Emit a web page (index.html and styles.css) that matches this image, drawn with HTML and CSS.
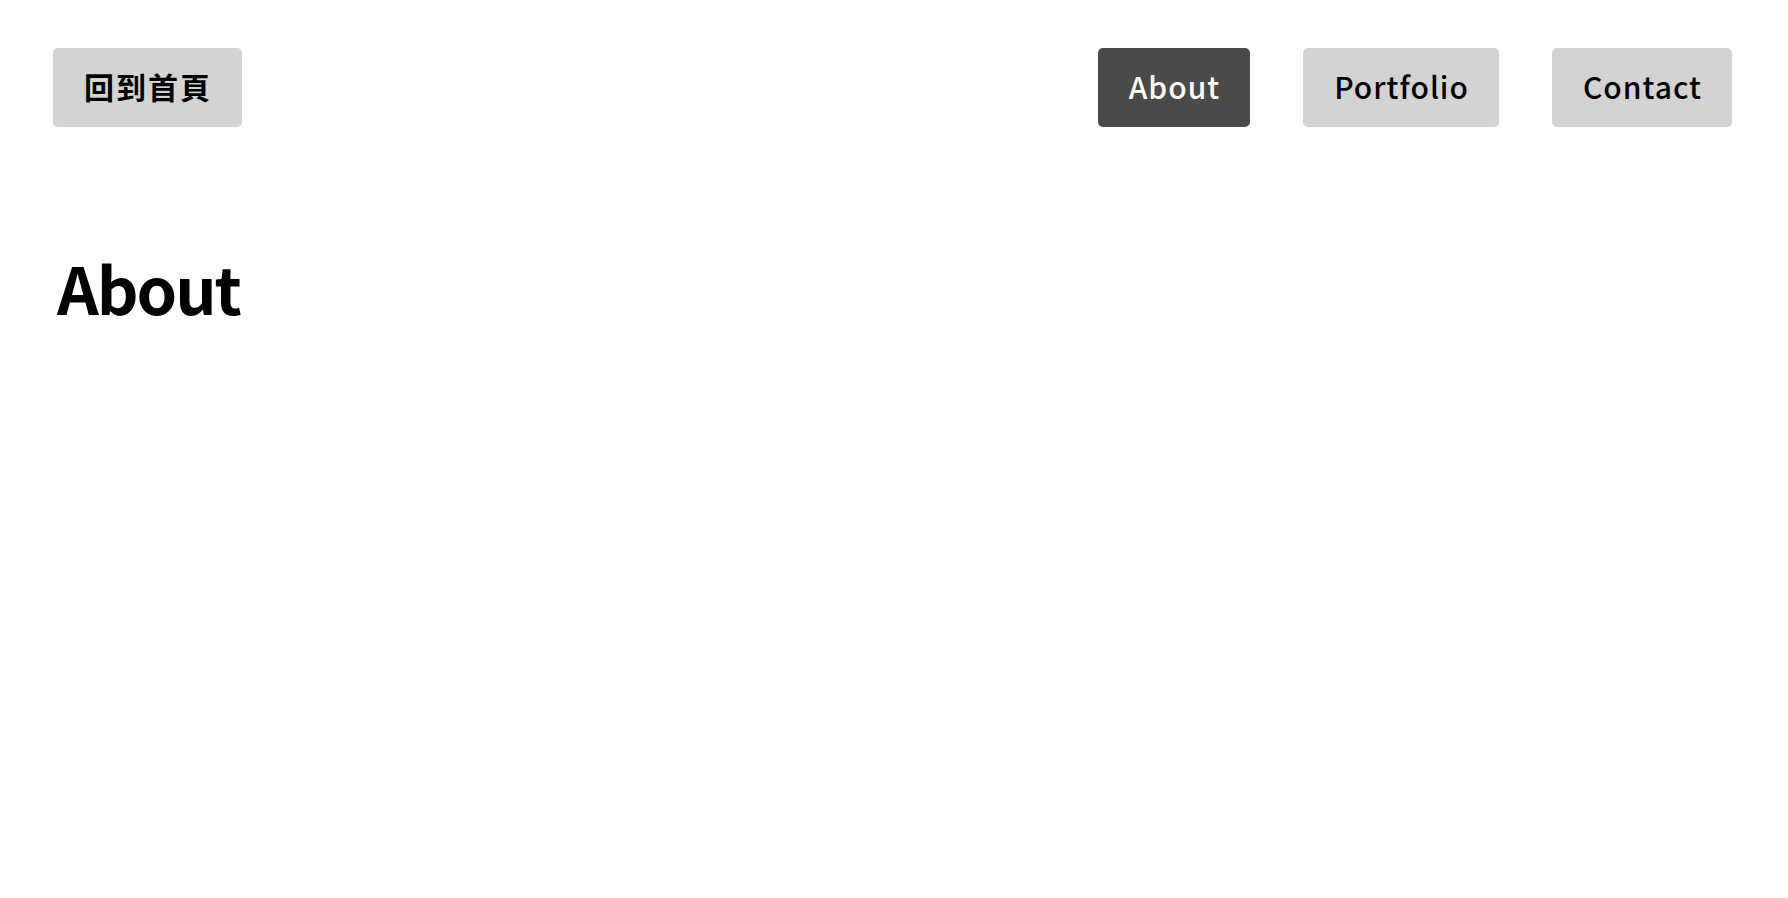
FILE: index.html
```html
<!DOCTYPE html>
<html lang="zh-Hant">
<head>
<meta charset="utf-8">
<title>About</title>
<link rel="stylesheet" href="styles.css">
</head>
<body>
<header class="top">
  <a class="btn btn-cjk" href="#">回到首頁</a>
  <nav class="nav">
    <a class="btn active" href="#">About</a>
    <a class="btn" href="#">Portfolio</a>
    <a class="btn" href="#">Contact</a>
  </nav>
</header>
<main class="main">
  <h1 class="title">About</h1>
</main>
</body>
</html>
```
FILE: styles.css
```css
* { box-sizing: border-box; }
html, body { margin: 0; padding: 0; background: #fff; }
body {
  font-family: "Noto Sans CJK TC", "Noto Sans", sans-serif;
  color: #000;
}
.top {
  display: flex;
  justify-content: space-between;
  align-items: center;
  padding: 48px 56px 0 53px;
}
.nav {
  display: flex;
  gap: 53px;
}
.btn {
  display: flex;
  align-items: center;
  justify-content: center;
  height: 79px;
  padding: 0 30px 4px 31px;
  background: #d3d3d3;
  color: #000;
  text-decoration: none;
  font-size: 30px;
  font-weight: 500;
  letter-spacing: 1px;
  border-radius: 5px;
}
.btn-cjk {
  letter-spacing: 2px;
  font-weight: 700;
}
.btn.active {
  background: #4a4a4a;
  color: #fff;
}
.main {
  padding: 0 57px;
}
.title {
  margin: 121px 0 0;
  font-size: 65px;
  font-weight: 700;
  letter-spacing: -2px;
  line-height: 1.2;
}
```
